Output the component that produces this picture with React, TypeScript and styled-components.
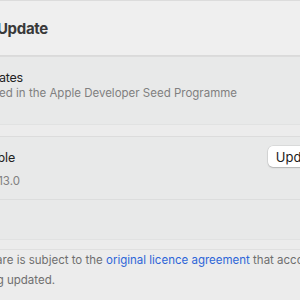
import React from "react";
import styled, { createGlobalStyle } from "styled-components";

const Global = createGlobalStyle`
  html, body { margin: 0; padding: 0; }
  body {
    background: #ececec;
    font-family: Inter, "Noto Sans", "Liberation Sans", sans-serif;
  }
`;

const Page = styled.div`
  width: 300px;
  height: 300px;
  overflow: hidden;
  background: #ececec;
  display: flex;
  flex-direction: column;
`;

/* Text whose start lies off the left edge: its end is fixed at $end px and it overflows leftwards */
const ClipEnd = styled.span<{ $end: number }>`
  display: flex;
  justify-content: flex-end;
  flex: none;
  width: ${(p) => p.$end}px;
  white-space: pre;
`;

const Header = styled.header`
  height: 56px;
  box-sizing: border-box;
  background: #efefef;
  border-top: 1px solid #dcdcdc;
  border-bottom: 1px solid #dadada;
  padding-top: 18px;
`;

const Title = styled.h1`
  margin: 0;
  font-size: 15px;
  line-height: 20px;
  font-weight: 700;
  letter-spacing: -0.3px;
  color: #393939;
`;

const Card = styled.section`
  background: #e8e9e9;
  border-top: 1px solid #dcdcdc;
  border-bottom: 1px solid #e1e2e2;
  display: flex;
  flex-direction: column;
`;

const Spacer = styled.div<{ $h: number }>`
  height: ${(p) => p.$h}px;
  flex: none;
`;

const Row = styled.div<{ $h: number; $pt: number; $divider?: boolean }>`
  height: ${(p) => p.$h}px;
  box-sizing: border-box;
  padding-top: ${(p) => p.$pt}px;
  display: flex;
  align-items: flex-start;
  justify-content: space-between;
  border-bottom: ${(p) => (p.$divider ? "1px solid #dcdddd" : "none")};
`;

const TextCol = styled.div`
  display: flex;
  flex-direction: column;
`;

const RowTitle = styled.div`
  font-size: 12.5px;
  line-height: 16px;
  letter-spacing: -0.2px;
  color: #222;
`;

const RowSub = styled.div<{ $mt: number }>`
  font-size: 11.5px;
  line-height: 15px;
  color: #808080;
  margin-top: ${(p) => p.$mt}px;
`;

const Button = styled.button`
  flex: none;
  margin: -4px -60px 0 0;
  height: 21px;
  padding: 0 8px;
  border: none;
  border-radius: 5px;
  background: #ffffff;
  box-shadow: 0 0 0 0.5px rgba(0, 0, 0, 0.12), 0 1px 1.5px rgba(0, 0, 0, 0.18);
  font-family: inherit;
  font-size: 13px;
  color: #1c1c1c;
  white-space: nowrap;
`;

const Footer = styled.footer`
  border-top: 1px solid #e0e0e0;
  font-size: 11.5px;
  line-height: 20px;
  color: #6f6f6f;
`;

const FootLine = styled.div`
  display: flex;
  white-space: pre;
`;

const Link = styled.span`
  color: #2e66d8;
`;

export default function App() {
  return (
    <Page>
      <Global />
      <Header>
        <Title>
          <ClipEnd $end={48}>Software Update</ClipEnd>
        </Title>
      </Header>
      <Card>
        <Row $h={67} $pt={13}>
          <TextCol>
            <RowTitle>
              <ClipEnd $end={23}>Beta Updates</ClipEnd>
            </RowTitle>
            <RowSub $mt={0}>
              <ClipEnd $end={237}>This Mac is enrolled in the Apple Developer Seed Programme</ClipEnd>
            </RowSub>
          </TextCol>
        </Row>
      </Card>
      <Spacer $h={11} />
      <Card>
        <Row $h={63} $pt={13} $divider>
          <TextCol>
            <RowTitle>
              <ClipEnd $end={15}>Update Available</ClipEnd>
            </RowTitle>
            <RowSub $mt={8}>
              <ClipEnd $end={20}>macOS Ventura 13.0</ClipEnd>
            </RowSub>
          </TextCol>
          <Button>Update Now</Button>
        </Row>
        <Row $h={39} $pt={0} />
      </Card>
      <Spacer $h={9} />
      <Footer>
        <FootLine>
          <ClipEnd $end={106}>Use of this software is subject to the </ClipEnd>
          <Link>original licence agreement</Link>
          <span> that accompanied the</span>
        </FootLine>
        <FootLine>
          <ClipEnd $end={55}>software being updated.</ClipEnd>
        </FootLine>
      </Footer>
    </Page>
  );
}
